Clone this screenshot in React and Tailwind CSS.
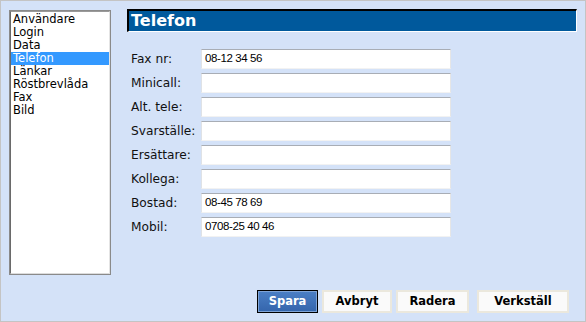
import React from "react";

const items = ["Användare", "Login", "Data", "Telefon", "Länkar", "Röstbrevlåda", "Fax", "Bild"];
const fields = [
  ["Fax nr:", "08-12 34 56"],
  ["Minicall:", ""],
  ["Alt. tele:", ""],
  ["Svarställe:", ""],
  ["Ersättare:", ""],
  ["Kollega:", ""],
  ["Bostad:", "08-45 78 69"],
  ["Mobil:", "0708-25 40 46"],
];

export default function App() {
  return (
    <div
      className="w-[586px] h-[322px] box-border border border-[#c4c4c4] bg-[#d4e2f8] flex flex-row"
      style={{ fontFamily: '"DejaVu Sans", Verdana, sans-serif' }}
    >
      <div className="ml-[8px] mt-[9px] w-[102px] h-[265px] box-border border border-[#8a8a8a] bg-white flex">
        <div className="flex-1 box-border border-l border-t border-l-[#6a6a6a] border-t-[#9a9a9a] border-r border-b border-r-[#e4e4e4] border-b-[#dcdcdc] pt-[1px]">
          {items.map((it) => (
            <div
              key={it}
              className={
                "h-[13px] leading-[13px] text-[11.5px] pl-[2px] " +
                (it === "Telefon" ? "bg-[#3399ff] text-white" : "text-black")
              }
            >
              {it}
            </div>
          ))}
        </div>
      </div>
      <div className="ml-[16px] flex flex-col flex-1 mr-[8px]">
        <div className="mt-[8px] h-[23px] w-[450px] box-border border-t-2 border-l-2 border-t-black border-l-black border-b border-r border-b-white border-r-white bg-[#00599c] flex items-center pl-[2px]">
          <span className="text-white font-bold text-[16px] leading-none -mt-[1px]">Telefon</span>
        </div>
        <div className="mt-[17px] flex flex-col gap-[4px]">
          {fields.map(([label, value]) => (
            <div key={label} className="flex flex-row items-center h-[20px]">
              <div className="w-[74px] pl-[4px] text-[12.2px] text-[#111] leading-none">{label}</div>
              <div
                className="w-[250px] h-[20px] box-border bg-white border-t border-l border-r border-b border-t-[#a8adb5] border-l-[#dfe2e6] border-r-[#e6e6e6] border-b-[#f2f2f2] flex items-center pl-[3px] text-[11.5px] text-black tracking-[-0.4px]"
                style={{ fontFamily: '"Liberation Sans", Arial, sans-serif' }}
              >
                {value}
              </div>
            </div>
          ))}
        </div>
        <div className="flex-1" />
        <div className="flex flex-row mb-[8px] pl-[130px] text-[11.5px] font-bold">
          <button className="w-[61px] h-[23px] box-border border border-black bg-[#3d70b6] text-white flex items-center justify-center p-0">
            <span className="w-full h-full box-border border border-[#7ea3d6] bg-gradient-to-b from-[#4a7ec4] to-[#3566ad] flex items-center justify-center">Spara</span>
          </button>
          <button className="ml-[4px] w-[70px] h-[23px] box-border border-2 border-[#ebe8dd] bg-[#fafafa] text-black flex items-center justify-center">
            Avbryt
          </button>
          <button className="ml-[4px] w-[73px] h-[23px] box-border border-2 border-[#ebe8dd] bg-[#fafafa] text-black flex items-center justify-center">
            Radera
          </button>
          <button className="ml-[8px] w-[92px] h-[23px] box-border border-2 border-[#ebe8dd] bg-[#fafafa] text-black flex items-center justify-center">
            Verkställ
          </button>
        </div>
      </div>
    </div>
  );
}
